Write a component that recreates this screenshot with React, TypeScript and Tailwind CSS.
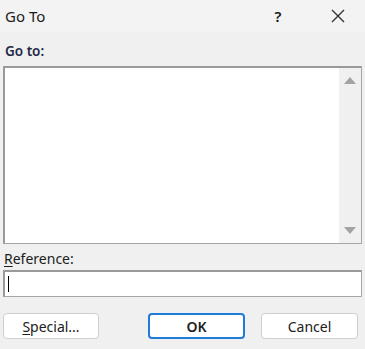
import React from "react";

export default function App() {
  const font = { fontFamily: '"Segoe UI", "Noto Sans", "Open Sans", sans-serif' };
  return (
    <div className="w-[365px] h-[349px] bg-[#f0f0f0] text-[#1a1a1a] overflow-hidden" style={font}>
      <div className="h-[32px] flex items-center bg-[#f3f3f3]">
        <div className="pl-[5px] text-[15px] text-[#1b1b1b] flex-1">Go To</div>
        <div className="w-[30px] text-center text-[15px] font-semibold mr-[30px]">?</div>
        <div className="w-[30px] flex justify-center mr-[12px]">
          <svg width="14" height="14" viewBox="0 0 14 14">
            <path d="M1 1 L13 13 M13 1 L1 13" stroke="#333" strokeWidth="1.4" />
          </svg>
        </div>
      </div>
      <div className="px-[3px]">
        <div className="pl-[2px] pt-[9px] h-[34px] text-[13.5px] font-semibold text-[#1f2a48]">Go to:</div>
        <div className="h-[178px] bg-white border border-[#a6a6a6] border-l-2 border-t-2 border-l-[#9a9a9a] border-t-[#9a9a9a] flex justify-end">
          <div className="w-[22px] bg-[#f0f0f0] flex flex-col items-center justify-between py-[8px]">
            <svg width="12" height="8" viewBox="0 0 12 8"><path d="M0 8 L6 1 L12 8 Z" fill="#a3a3a3" /></svg>
            <svg width="12" height="8" viewBox="0 0 12 8"><path d="M0 0 L6 7 L12 0 Z" fill="#a3a3a3" /></svg>
          </div>
        </div>
        <div className="pl-[1px] pt-[4px] h-[26px] text-[14px] text-[#202020]">
          <span className="underline underline-offset-2">R</span>eference:
        </div>
        <div className="h-[27px] bg-white border border-[#a6a6a6] border-l-2 border-t-2 border-l-[#9a9a9a] border-t-[#9a9a9a] flex items-center pl-[3px]">
          <div className="w-[1px] h-[16px] bg-black" />
        </div>
        <div className="flex mt-[16px] h-[26px] text-[14px]">
          <button className="w-[96px] h-[26px] bg-white border border-[#cfcfcf] rounded-[4px] text-[#202020]">
            <span className="underline underline-offset-2">S</span>pecial...
          </button>
          <button className="ml-[49px] w-[97px] h-[26px] bg-white border-2 border-[#1f7ad8] rounded-[4px] font-semibold text-[#202020]">
            OK
          </button>
          <button className="ml-[16px] w-[97px] h-[26px] bg-white border border-[#cfcfcf] rounded-[4px] text-[#202020]">
            Cancel
          </button>
        </div>
      </div>
    </div>
  );
}
